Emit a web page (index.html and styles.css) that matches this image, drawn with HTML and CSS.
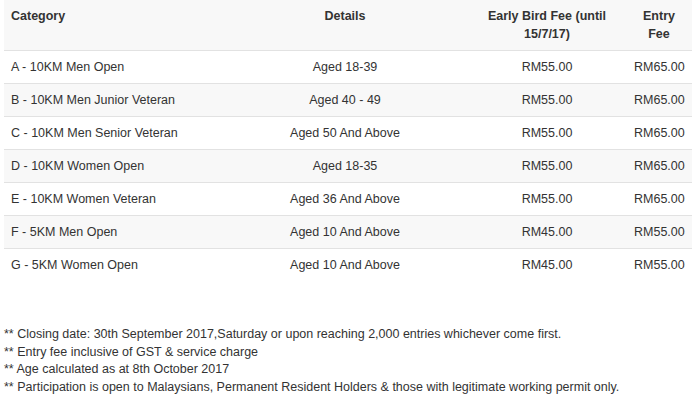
FILE: index.html
```html
<!DOCTYPE html>
<html>
<head>
<meta charset="utf-8">
<link rel="stylesheet" href="styles.css">
</head>
<body>
<div class="page">
  <table class="fees">
    <colgroup>
      <col class="c-cat">
      <col class="c-det">
      <col class="c-early">
      <col class="c-entry">
    </colgroup>
    <thead>
      <tr>
        <th class="left">Category</th>
        <th>Details</th>
        <th>Early Bird Fee (until 15/7/17)</th>
        <th>Entry Fee</th>
      </tr>
    </thead>
    <tbody>
      <tr><td class="left">A - 10KM Men Open</td><td>Aged 18-39</td><td>RM55.00</td><td>RM65.00</td></tr>
      <tr><td class="left">B - 10KM Men Junior Veteran</td><td>Aged 40 - 49</td><td>RM55.00</td><td>RM65.00</td></tr>
      <tr><td class="left">C - 10KM Men Senior Veteran</td><td>Aged 50 And Above</td><td>RM55.00</td><td>RM65.00</td></tr>
      <tr><td class="left">D - 10KM Women Open</td><td>Aged 18-35</td><td>RM55.00</td><td>RM65.00</td></tr>
      <tr><td class="left">E - 10KM Women Veteran</td><td>Aged 36 And Above</td><td>RM55.00</td><td>RM65.00</td></tr>
      <tr><td class="left">F - 5KM Men Open</td><td>Aged 10 And Above</td><td>RM45.00</td><td>RM55.00</td></tr>
      <tr><td class="left">G - 5KM Women Open</td><td>Aged 10 And Above</td><td>RM45.00</td><td>RM55.00</td></tr>
    </tbody>
  </table>
  <div class="notes">
    <p>** Closing date: 30th September 2017,Saturday or upon reaching 2,000 entries whichever come first.</p>
    <p>** Entry fee inclusive of GST &amp; service charge</p>
    <p>** Age calculated as at 8th October 2017</p>
    <p>** Participation is open to Malaysians, Permanent Resident Holders &amp; those with legitimate working permit only.</p>
  </div>
</div>
</body>
</html>
```

FILE: styles.css
```css
html, body {
  margin: 0;
  padding: 0;
  background: #ffffff;
}
body {
  font-family: "Liberation Sans", Arial, sans-serif;
  font-size: 12.5px;
  line-height: 18px;
  color: #333333;
}
.page {
  padding: 0 4px;
}
.fees {
  width: 688px;
  border-collapse: collapse;
  table-layout: fixed;
}
.c-cat { width: 218px; }
.c-det { width: 246px; }
.c-early { width: 158px; }
.c-entry { width: 66px; }
.fees th {
  font-weight: bold;
  padding: 7px 8px;
  text-align: center;
  vertical-align: top;
  background: #f8f8f8;
  border-bottom: 1px solid #e2e2e2;
}
.fees td {
  padding: 7px 8px;
  text-align: center;
  vertical-align: top;
  border-top: 1px solid #e2e2e2;
}
.fees tbody tr:first-child td {
  border-top: none;
}
.fees tbody tr:nth-child(even) td {
  background: #f8f8f8;
}
.fees .left {
  text-align: left;
  padding-left: 7px;
}
.notes {
  margin-top: 45px;
}
.notes p {
  margin: 0;
  line-height: 17.7px;
}
```
